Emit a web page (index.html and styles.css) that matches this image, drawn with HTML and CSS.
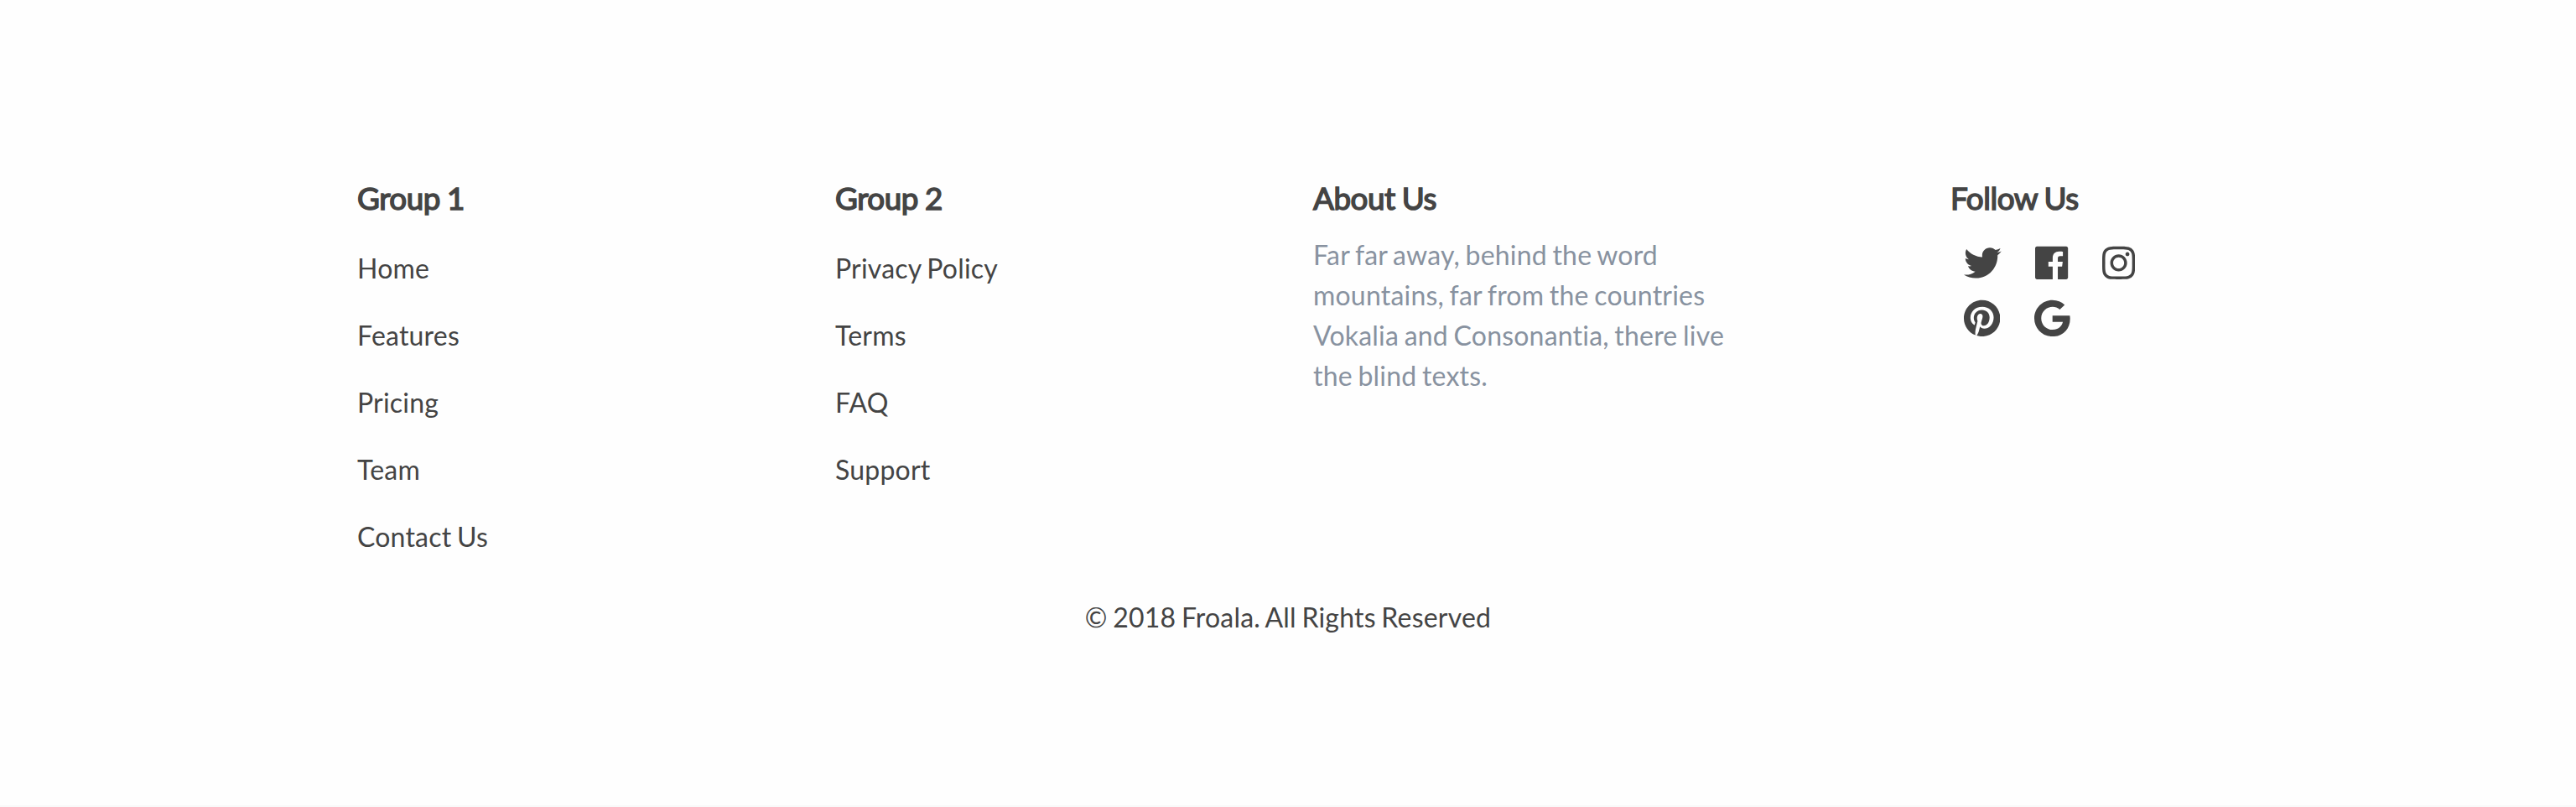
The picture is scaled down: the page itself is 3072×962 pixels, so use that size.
FILE: index.html
```html
<!DOCTYPE html>
<html lang="en">
<head>
<meta charset="utf-8">
<title>Footer</title>
<link rel="stylesheet" href="styles.css">
</head>
<body>
<footer class="footer">
  <div class="row">
    <nav class="col">
      <h5>Group 1</h5>
      <ul>
        <li><a>Home</a></li>
        <li><a>Features</a></li>
        <li><a>Pricing</a></li>
        <li><a>Team</a></li>
        <li><a>Contact Us</a></li>
      </ul>
    </nav>
    <nav class="col">
      <h5>Group 2</h5>
      <ul>
        <li><a>Privacy Policy</a></li>
        <li><a>Terms</a></li>
        <li><a>FAQ</a></li>
        <li><a>Support</a></li>
      </ul>
    </nav>
    <div class="col">
      <h5>About Us</h5>
      <p class="about">Far far away, behind the word mountains, far from the countries Vokalia and Consonantia, there live the blind texts.</p>
    </div>
    <div class="col">
      <h5>Follow Us</h5>
      <div class="social">
        <svg class="icon twitter" viewBox="0 0 512 512"><path d="M459.37 151.716c.325 4.548.325 9.097.325 13.645 0 138.72-105.583 298.558-298.558 298.558-59.452 0-114.68-17.219-161.137-47.106 8.447.974 16.568 1.299 25.34 1.299 49.055 0 94.213-16.568 130.274-44.832-46.132-.975-84.792-31.188-98.112-72.772 6.498.974 12.995 1.624 19.818 1.624 9.421 0 18.843-1.3 27.614-3.573-48.081-9.747-84.143-51.98-84.143-102.985v-1.299c13.969 7.797 30.214 12.67 47.431 13.319-28.264-18.843-46.781-51.005-46.781-87.391 0-19.492 5.197-37.36 14.294-52.954 51.655 63.675 129.3 105.258 216.365 109.807-1.624-7.797-2.599-15.918-2.599-24.04 0-57.828 46.782-104.934 104.934-104.934 30.213 0 57.502 12.67 76.67 33.137 23.715-4.548 46.456-13.32 66.599-25.34-7.798 24.366-24.366 44.833-46.132 57.827 21.117-2.273 41.584-8.122 60.426-16.243-14.292 20.791-32.161 39.308-52.628 54.253z"/></svg>
        <svg class="icon facebook" viewBox="0 0 448 512"><path d="M448 56.7v398.5c0 13.7-11.1 24.7-24.7 24.7H309.1V306.5h58.2l8.7-67.6h-67v-43.2c0-19.6 5.4-32.9 33.5-32.9h35.8v-60.5c-6.2-.8-27.4-2.7-52.2-2.7-51.6 0-87 31.5-87 89.4v49.9h-58.4v67.6h58.4V480H24.7C11.1 480 0 468.9 0 455.3V56.7C0 43.1 11.1 32 24.7 32h398.5c13.7 0 24.8 11.1 24.8 24.7z"/></svg>
        <svg class="icon instagram" viewBox="0 0 448 512"><path d="M224.1 141c-63.6 0-114.9 51.3-114.9 114.9s51.3 114.9 114.9 114.9S339 319.5 339 255.9 287.7 141 224.1 141zm0 189.6c-41.1 0-74.7-33.5-74.7-74.7s33.5-74.7 74.7-74.7 74.7 33.5 74.7 74.7-33.6 74.7-74.7 74.7zm146.4-194.3c0 14.9-12 26.8-26.8 26.8-14.9 0-26.8-12-26.8-26.8s12-26.8 26.8-26.8 26.8 12 26.8 26.8zm76.1 27.2c-1.7-35.9-9.9-67.7-36.2-93.9-26.2-26.2-58-34.4-93.9-36.2-37-2.1-147.9-2.1-184.9 0-35.8 1.7-67.6 9.9-93.9 36.1s-34.4 58-36.2 93.9c-2.1 37-2.1 147.9 0 184.9 1.7 35.9 9.9 67.7 36.2 93.9s58 34.4 93.9 36.2c37 2.1 147.9 2.1 184.9 0 35.9-1.7 67.7-9.9 93.9-36.2 26.2-26.2 34.4-58 36.2-93.9 2.1-37 2.1-147.8 0-184.8zM398.8 388c-7.8 19.6-22.9 34.7-42.6 42.6-29.5 11.7-99.5 9-132.1 9s-102.7 2.6-132.1-9c-19.6-7.8-34.7-22.9-42.6-42.6-11.7-29.5-9-99.5-9-132.1s-2.6-102.7 9-132.1c7.8-19.6 22.9-34.7 42.6-42.6 29.5-11.7 99.5-9 132.1-9s102.7-2.6 132.1 9c19.6 7.8 34.7 22.9 42.6 42.6 11.7 29.5 9 99.5 9 132.1s2.7 102.7-9 132.1z"/></svg>
        <svg class="icon pinterest" viewBox="0 0 496 512"><path d="M496 256c0 137-111 248-248 248-25.6 0-50.2-3.900-73.400-11.100 10.100-16.500 25.200-43.500 30.800-65 3-11.600 15.400-59 15.400-59 8.100 15.400 31.700 28.500 56.800 28.500 74.800 0 128.700-68.800 128.700-154.300 0-81.900-66.900-143.200-152.900-143.200-107 0-163.900 71.800-163.900 150.100 0 36.400 19.400 81.700 50.300 96.100 4.700 2.200 7.200 1.200 8.300-3.300.8-3.400 5-20.300 6.900-28.100.6-2.500.3-4.700-1.700-7.100-10.100-12.500-18.300-35.300-18.300-56.600 0-54.700 41.400-107.600 112-107.600 60.900 0 103.600 41.500 103.600 100.900 0 67.100-33.900 113.600-78 113.600-24.300 0-42.600-20.100-36.700-44.800 7-29.500 20.500-61.300 20.500-82.600 0-19-10.200-34.900-31.400-34.900-24.900 0-44.900 25.700-44.900 60.200 0 22 7.400 36.800 7.400 36.800s-24.500 103.800-29 123.200c-5 21.400-3 51.600-.9 71.200C65.400 450.900 0 361.100 0 256 0 119 111 8 248 8s248 111 248 248z"/></svg>
        <svg class="icon google" viewBox="0 0 488 512"><path d="M488 261.800C488 403.300 391.100 504 248 504 110.800 504 0 393.200 0 256S110.800 8 248 8c66.800 0 123 24.500 166.300 64.900l-67.500 64.900C258.500 52.600 94.300 116.600 94.300 256c0 86.500 69.100 156.600 153.700 156.600 98.200 0 135-70.400 140.800-106.900H248v-85.300h236.100c2.300 12.700 3.900 24.900 3.900 41.400z"/></svg>
      </div>
    </div>
  </div>
  <p class="copyright">© 2018 Froala. All Rights Reserved</p>
</footer>
</body>
</html>
```
FILE: styles.css
```css
* { box-sizing: border-box; }

body {
  margin: 0;
  background: #fefefe;
  color: #444;
  font: 400 32px/48px Lato, sans-serif;
  letter-spacing: 0.2px;
  word-spacing: -1.8px;
}

.footer {
  height: 962px;
  padding-top: 208px;
  border-bottom: 2px solid #f9f9f9;
}

.row {
  display: grid;
  grid-template-columns: 510px 510px 700px 320px;
  column-gap: 60px;
  width: 2220px;
  height: 504px;
  margin: 0 auto;
}

h5 {
  margin: 0 0 15px;
  font-size: 36.8px;
  line-height: 57px;
  font-weight: 400;
  letter-spacing: -0.45px;
  word-spacing: -1px;
  -webkit-text-stroke: 1.5px #444;
}

ul {
  margin: 0;
  padding: 16px 0 0;
  list-style: none;
}

li { margin-bottom: 32px; }

p { margin: 0; }

.about {
  width: 514px;
  color: #8892a0;
}

.social {
  display: flex;
  flex-wrap: wrap;
  gap: 21.2px 40.6px;
  padding: 10.6px 50px 0 16px;
}

.icon {
  display: block;
  height: 44.8px;
  fill: #444;
}

.twitter { width: 44.8px; }
.facebook, .instagram { width: 39.2px; }
.pinterest { width: 43.4px; }
.google { width: 42.7px; }

.copyright { text-align: center; }
```
